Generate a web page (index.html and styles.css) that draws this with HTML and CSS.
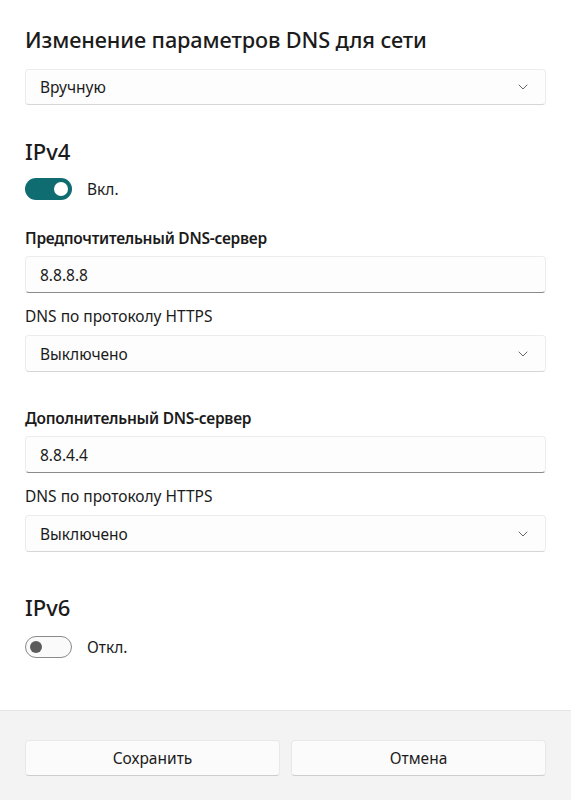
FILE: index.html
```html
<!DOCTYPE html>
<html lang="ru">
<head>
<meta charset="utf-8">
<title>DNS</title>
<link rel="stylesheet" href="styles.css">
</head>
<body>
<div class="page">
  <main class="content">
    <h1 class="title">Изменение параметров DNS для сети</h1>
    <div class="select first">
      <span>Вручную</span>
      <svg class="chev" width="10" height="6" viewBox="0 0 10 6"><path d="M1 1 L5 5 L9 1" fill="none" stroke="#666666" stroke-width="1" stroke-linecap="round" stroke-linejoin="round"/></svg>
    </div>

    <h2 class="section v4">IPv4</h2>
    <div class="toggle-row on-row">
      <span class="toggle on"><span class="knob"></span></span>
      <span class="toggle-label">Вкл.</span>
    </div>

    <div class="label strong l1">Предпочтительный DNS-сервер</div>
    <div class="input">8.8.8.8</div>
    <div class="label l2">DNS по протоколу HTTPS</div>
    <div class="select">
      <span>Выключено</span>
      <svg class="chev" width="10" height="6" viewBox="0 0 10 6"><path d="M1 1 L5 5 L9 1" fill="none" stroke="#666666" stroke-width="1" stroke-linecap="round" stroke-linejoin="round"/></svg>
    </div>

    <div class="label strong l3">Дополнительный DNS-сервер</div>
    <div class="input">8.8.4.4</div>
    <div class="label l2">DNS по протоколу HTTPS</div>
    <div class="select">
      <span>Выключено</span>
      <svg class="chev" width="10" height="6" viewBox="0 0 10 6"><path d="M1 1 L5 5 L9 1" fill="none" stroke="#666666" stroke-width="1" stroke-linecap="round" stroke-linejoin="round"/></svg>
    </div>

    <h2 class="section v6">IPv6</h2>
    <div class="toggle-row off-row">
      <span class="toggle off"><span class="knob"></span></span>
      <span class="toggle-label">Откл.</span>
    </div>
  </main>
  <footer class="footer">
    <button class="btn">Сохранить</button>
    <button class="btn">Отмена</button>
  </footer>
</div>
</body>
</html>
```
FILE: styles.css
```css
* { box-sizing: border-box; }
html, body { margin: 0; padding: 0; }
body {
  background: #ffffff;
  color: #1b1b1b;
  font-family: "Noto Sans", "Open Sans", sans-serif;
}
.page {
  height: 800px;
  display: flex;
  flex-direction: column;
}
.content {
  flex: 1;
  padding: 0 25px;
}
.title {
  margin: 26px 0 0;
  font-size: 21.7px;
  line-height: 28px;
  font-weight: 500;
  letter-spacing: -0.1px;
}
.select, .input {
  height: 37px;
  background: #fdfdfd;
  border: 1px solid #ececec;
  border-bottom-color: #d6d6d6;
  border-radius: 4px;
  display: flex;
  align-items: center;
  justify-content: space-between;
  padding: 0 14px 0 14px;
  font-size: 15.5px;
  margin-top: 9px;
}
.select.first { margin-top: 15px; height: 36px; }
.input {
  border-bottom: 1px solid #8a8a8a;
  margin-top: 8px;
}
.chev { margin-right: 3px; }
.section {
  margin: 32px 0 0;
  font-size: 22px;
  line-height: 28px;
  font-weight: 500;
}
.section.v6 { margin-top: 41px; }
.toggle-row {
  display: flex;
  align-items: center;
  gap: 15px;
  margin-top: 13px;
  height: 22px;
  font-size: 15.5px;
}
.off-row { margin-top: 15px; }
.toggle {
  width: 47px;
  height: 22px;
  border-radius: 11px;
  display: flex;
  align-items: center;
  padding: 0 4px;
}
.toggle.on {
  background: #0f6c70;
  justify-content: flex-end;
}
.toggle.on .knob {
  width: 14px; height: 14px; border-radius: 50%; background: #ffffff;
}
.toggle.off {
  border: 1px solid #8a8a8a;
  background: #fafafa;
  justify-content: flex-start;
  padding: 0 4px;
}
.toggle.off .knob {
  width: 12px; height: 12px; border-radius: 50%; background: #5c5c5c;
}
.label {
  font-size: 15.5px;
  line-height: 20px;
  margin-top: 13px;
}
.label.strong { font-weight: 600; letter-spacing: -0.25px; }
.l1 { margin-top: 28px; }
.l3 { margin-top: 36px; }
.footer {
  height: 90px;
  background: #f3f3f3;
  border-top: 1px solid #e5e5e5;
  display: flex;
  gap: 11px;
  padding: 29px 25px 0;
}
.btn {
  flex: 1;
  height: 36px;
  background: #fbfbfb;
  border: 1px solid #e8e8e8;
  border-bottom-color: #cdcdcd;
  border-radius: 4px;
  font-family: "Noto Sans", "Open Sans", sans-serif;
  font-size: 15.5px;
  color: #1b1b1b;
  padding: 0;
}
```
